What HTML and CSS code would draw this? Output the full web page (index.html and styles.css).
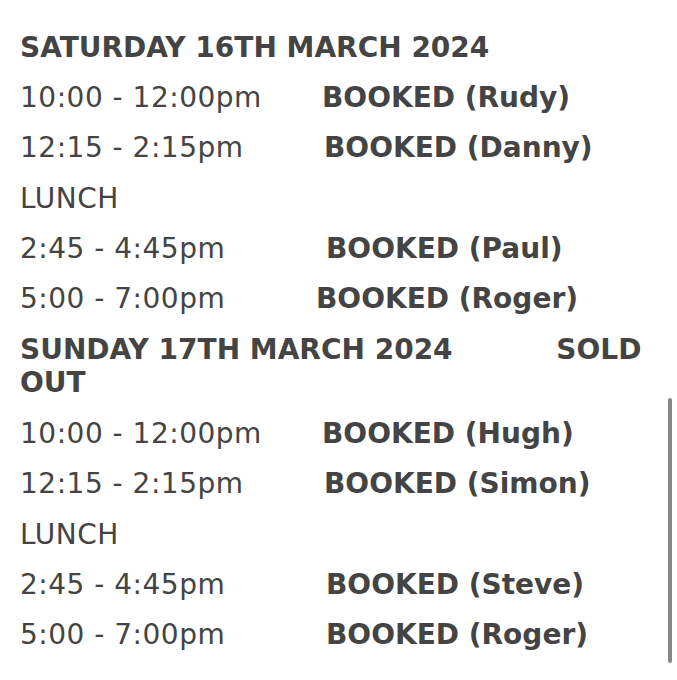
FILE: index.html
```html
<!DOCTYPE html>
<html lang="en">
<head>
<meta charset="utf-8">
<title>Bookings</title>
<link rel="stylesheet" href="styles.css">
</head>
<body>
<main class="schedule">
  <p class="day">SATURDAY 16TH MARCH 2024</p>
  <p class="slot"><span class="time">10:00 - 12:00pm</span><span class="booked">BOOKED (Rudy)</span></p>
  <p class="slot"><span class="time">12:15 - 2:15pm</span><span class="booked s2">BOOKED (Danny)</span></p>
  <p class="slot">LUNCH</p>
  <p class="slot"><span class="time">2:45 - 4:45pm</span><span class="booked s4">BOOKED (Paul)</span></p>
  <p class="slot"><span class="time">5:00 - 7:00pm</span><span class="booked sm6">BOOKED (Roger)</span></p>
  <p class="day day-sold"><span class="day-name">SUNDAY 17TH MARCH 2024</span> <span class="sold">SOLD OUT</span></p>
  <p class="slot"><span class="time">10:00 - 12:00pm</span><span class="booked">BOOKED (Hugh)</span></p>
  <p class="slot"><span class="time">12:15 - 2:15pm</span><span class="booked s2">BOOKED (Simon)</span></p>
  <p class="slot">LUNCH</p>
  <p class="slot"><span class="time">2:45 - 4:45pm</span><span class="booked s4">BOOKED (Steve)</span></p>
  <p class="slot"><span class="time">5:00 - 7:00pm</span><span class="booked s4">BOOKED (Roger)</span></p>
</main>
<div class="scrollbar"></div>
</body>
</html>
```
FILE: styles.css
```css
html, body {
  margin: 0;
  padding: 0;
  background: #fff;
}
body {
  font-family: "DejaVu Sans", Verdana, sans-serif;
  font-size: 28px;
  color: #444;
  overflow: hidden;
  height: 680px;
}
.schedule {
  padding: 32px 0 0 20px;
  width: 660px;
  box-sizing: border-box;
}
.schedule p {
  margin: 0 0 18.2px 0;
  line-height: 32px;
}
.day {
  font-weight: bold;
}
.schedule .day-sold {
  line-height: 33px;
  margin-bottom: 19px;
}
.day-name {
  white-space: nowrap;
}
.sold {
  margin-left: 94px;
}
.slot {
  letter-spacing: 0.5px;
  white-space: nowrap;
}
.time {
  display: inline-block;
  width: 302px;
}
.booked {
  font-weight: bold;
  letter-spacing: 0;
}
.s2 { margin-left: 2px; }
.s4 { margin-left: 4px; }
.sm6 { margin-left: -6px; }
.scrollbar {
  position: absolute;
  left: 668px;
  top: 398px;
  width: 4px;
  height: 265px;
  border-radius: 2px;
  background: #888;
}
```
